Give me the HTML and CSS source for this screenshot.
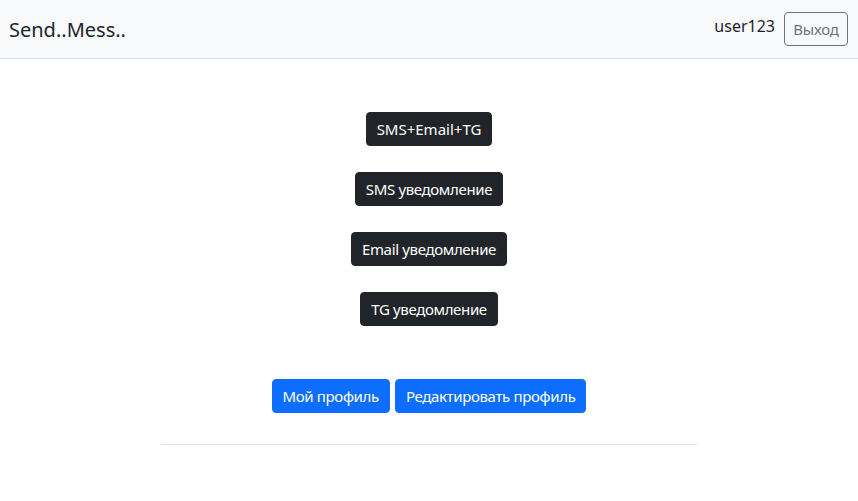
FILE: index.html
```html
<!DOCTYPE html>
<html lang="ru">
<head>
<meta charset="utf-8">
<title>Send..Mess..</title>
<link rel="stylesheet" href="styles.css">
</head>
<body>
<nav class="navbar">
  <a class="brand" href="#">Send..Mess..</a>
  <div class="nav-right">
    <span class="username">user123</span>
    <button class="btn btn-outline">Выход</button>
  </div>
</nav>
<main class="main">
  <div class="stack">
    <button class="btn btn-dark">SMS+Email+TG</button>
    <button class="btn btn-dark btn-ru">SMS уведомление</button>
    <button class="btn btn-dark btn-ru">Email уведомление</button>
    <button class="btn btn-dark btn-ru">TG уведомление</button>
  </div>
  <div class="profile-row">
    <button class="btn btn-primary btn-ru">Мой профиль</button>
    <button class="btn btn-primary btn-ru">Редактировать профиль</button>
  </div>
  <hr class="divider">
</main>
</body>
</html>
```
FILE: styles.css
```css
* { box-sizing: border-box; }
html, body { margin: 0; padding: 0; }
body {
  font-family: "Noto Sans", "Open Sans", sans-serif;
  color: #212529;
  background: #fff;
  font-size: 16px;
}
.navbar {
  height: 59px;
  background: #f8f9fa;
  border-bottom: 1px solid #dee2e6;
  display: flex;
  align-items: center;
  justify-content: space-between;
  padding: 0 10px 0 9px;
}
.brand {
  font-size: 20px;
  color: #212529;
  text-decoration: none;
  margin-top: 1px;
}
.nav-right {
  display: flex;
  align-items: center;
  gap: 9px;
}
.username {
  font-size: 16px;
  margin-top: -6px;
}
.btn {
  font-family: inherit;
  font-size: 15px;
  line-height: 20px;
  height: 34px;
  padding: 6px 10px;
  border-radius: 4px;
  border: 1px solid transparent;
  cursor: pointer;
}
.btn-ru {
  letter-spacing: -0.35px;
}
.btn-outline {
  background: transparent;
  color: #6c757d;
  border-color: #6c757d;
  width: 64px;
  padding: 6px 0;
  letter-spacing: -0.2px;
}
.btn-dark {
  background: #212529;
  color: #fff;
  border-color: #212529;
}
.btn-primary {
  background: #0d6efd;
  color: #fff;
  border-color: #0d6efd;
}
.main {
  display: flex;
  flex-direction: column;
  align-items: center;
  padding-top: 53px;
}
.stack {
  display: flex;
  flex-direction: column;
  align-items: center;
  gap: 26px;
}
.profile-row {
  display: flex;
  gap: 5px;
  margin-top: 53px;
}
.divider {
  width: 536px;
  margin: 31px 0 0;
  border: 0;
  border-top: 1px solid #dee2e6;
}
```
